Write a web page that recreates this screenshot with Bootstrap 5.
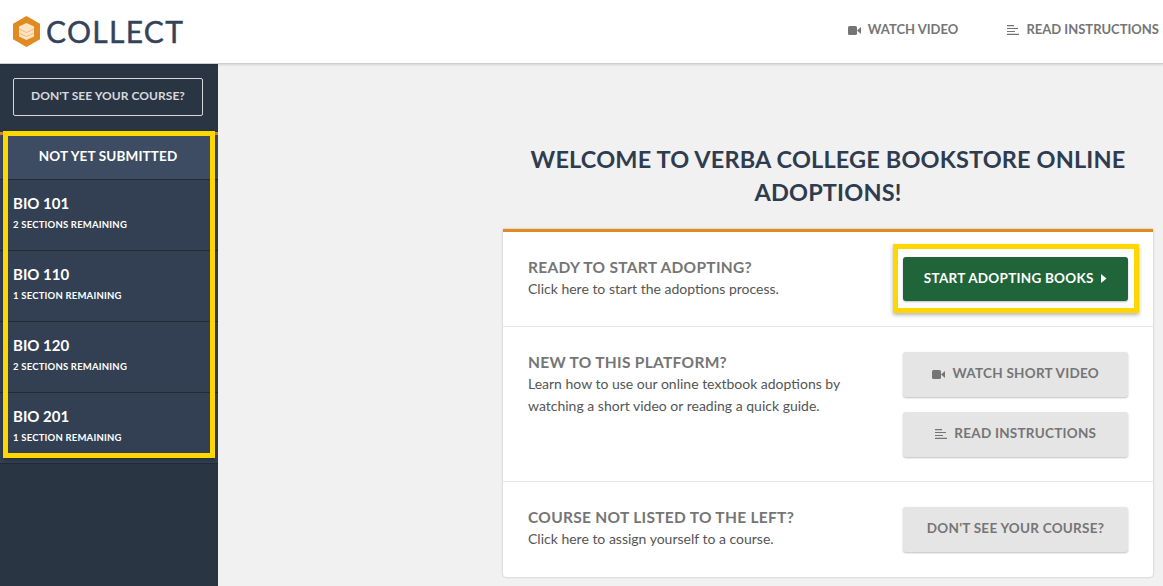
<!DOCTYPE html>
<html lang="en">
<head>
  <meta charset="UTF-8">
  <title>Collect</title>
  <meta name="viewport" content="width=device-width, initial-scale=1">
  <link href="https://cdn.jsdelivr.net/npm/bootstrap@5.3.3/dist/css/bootstrap.min.css" rel="stylesheet">
  <style>
    html, body { height: 586px; overflow: hidden; }
    body { font-family: Lato, "Open Sans", sans-serif; background: #f1f1f1; color: #333; }
    .top-bar { height: 64px; background: #fff; border-bottom: 1px solid #ccc; box-shadow: 0 1px 2px rgba(0,0,0,.12); padding-left: 13px; position: relative; z-index: 2; }
    .logo-text { font-size: 30px; line-height: 1; color: #34435a; margin: -2px 0 0 6px; letter-spacing: 1.3px; font-weight: 400; -webkit-text-stroke: .4px #34435a; }
    .top-link { font-size: 13px; font-weight: 700; color: #757575; text-decoration: none; }
    .top-links { gap: 49px; padding-right: 4px; margin-top: -4px; }
    .side-bar { width: 218px; height: 522px; background: #2a3543; color: #fff; padding-top: 14px; flex-shrink: 0; }
    .side-btn { display: block; width: 190px; height: 38px; margin: 0 0 16px 13px; padding: 0 0 2px; border: 1px solid #d5d7da; border-radius: 2px; color: #d8dade; font-size: 12px; font-weight: 700; letter-spacing: .05px; background: transparent; }
    .side-group { position: relative; border-top: 3px solid #e08a22; }
    .side-head { height: 45px; line-height: 43px; background: #3d4c63; text-align: center; font-size: 13.5px; font-weight: 700; letter-spacing: .15px; padding-right: 2px; border-bottom: 1px solid #222c39; }
    .side-item { height: 71px; background: #334053; padding: 12px 13px 0; border-bottom: 1px solid #222c39; }
    .side-item .course { font-size: 15px; font-weight: 700; line-height: 22px; }
    .side-item .remain { font-size: 9.5px; font-weight: 700; line-height: 14px; margin-top: 4px; letter-spacing: .2px; }
    .marker { position: absolute; border: 5px solid #ffd700; box-shadow: 0 2px 4px rgba(0,0,0,.3); pointer-events: none; }
    .marker-side { left: 3px; right: 3px; top: -4px; bottom: 6px; }
    .marker-btn { left: -10px; right: -11px; top: -13px; bottom: -12px; }
    .main-area { padding: 0 10px 0 285px; flex-grow: 1; min-width: 0; }
    .page-title { font-size: 23.5px; line-height: 33px; font-weight: 700; color: #2f3c4f; text-align: center; margin: 79px 0 20px; letter-spacing: .15px; }
    .adopt-card { background: #fff; border-radius: 0 0 3px 3px; border-top: 3px solid #e08a22; box-shadow: 0 0 2px rgba(0,0,0,.3); }
    .adopt-row { padding: 25px 25px 0; border-bottom: 1px solid #e6e6e6; }
    .adopt-row:last-child { border-bottom: 0; }
    .row-ready { height: 95px; }
    .row-new { height: 155px; }
    .row-course { height: 95px; }
    .adopt-row h3 { font-size: 15.5px; line-height: 20px; font-weight: 700; color: #757575; margin: 0 0 1px; letter-spacing: .3px; }
    .adopt-row p { font-size: 14px; line-height: 22px; color: #555; margin: 0; }
    .adopt-copy { width: 330px; }
    .btn-wrap { position: relative; width: 225px; }
    .btn-stack { gap: 15px; }
    .act-btn { display: block; width: 225px; height: 45px; line-height: 20px; padding: 0 0 3px; border: 0; border-radius: 3px; font-size: 13.5px; font-weight: 700; letter-spacing: .25px; text-align: center; background: #e5e5e5; color: #757575; box-shadow: 0 1px 2px rgba(0,0,0,.25); }
    .act-green { background: #20643a; color: #fff; height: 44px; padding-bottom: 2px; }
    .ico { display: inline-block; vertical-align: -1px; margin-right: 4px; }
    .caret-ico { vertical-align: 0; }
  </style>
</head>
<body>
  <!-- header -->
  <div class="top-bar d-flex justify-content-between align-items-center">
    <div class="d-flex align-items-center">
      <svg width="27" height="31" viewBox="0 0 27 31">
        <path d="M13.5 0 27 7.7v15.6L13.5 31 0 23.3V7.7z" fill="#e08a22"/>
        <path d="M13.5 7 21 10.5v10L13.5 24 6 20.5v-10z" fill="#fbe3c4"/>
        <path d="M6 13l7.5 3.5L21 13M6 17l7.5 3.5L21 17" fill="none" stroke="#efbd82" stroke-width="1"/>
      </svg>
      <span class="logo-text">COLLECT</span>
    </div>
    <div class="d-flex top-links">
      <a class="top-link" href="#">
        <svg class="ico" width="13" height="9" viewBox="0 0 13 9"><rect width="9" height="9" rx="1.5" fill="#757575"/><path d="M9 4.5 13 1v7z" fill="#757575"/></svg>
        WATCH VIDEO</a>
      <a class="top-link" href="#">
        <svg class="ico" width="12" height="10" viewBox="0 0 12 10"><path d="M0 .6h7M0 3.5h11M0 6.5h8M0 9.4h12" stroke="#757575" stroke-width="1.2"/></svg>
        READ INSTRUCTIONS</a>
    </div>
  </div>

  <div class="d-flex">
    <!-- sidebar -->
    <div class="side-bar">
      <button class="side-btn text-center">DON'T SEE YOUR COURSE?</button>
      <div class="side-group">
        <div class="side-head">NOT YET SUBMITTED</div>
        <div class="side-item"><div class="course">BIO 101</div><div class="remain">2 SECTIONS REMAINING</div></div>
        <div class="side-item"><div class="course">BIO 110</div><div class="remain">1 SECTION REMAINING</div></div>
        <div class="side-item"><div class="course">BIO 120</div><div class="remain">2 SECTIONS REMAINING</div></div>
        <div class="side-item"><div class="course">BIO 201</div><div class="remain">1 SECTION REMAINING</div></div>
        <div class="marker marker-side"></div>
      </div>
    </div>

    <!-- main -->
    <div class="main-area">
      <h1 class="page-title">WELCOME TO VERBA COLLEGE BOOKSTORE ONLINE ADOPTIONS!</h1>
      <div class="adopt-card">
        <div class="adopt-row row-ready d-flex justify-content-between align-items-start">
          <div class="adopt-copy">
            <h3>READY TO START ADOPTING?</h3>
            <p>Click here to start the adoptions process.</p>
          </div>
          <div class="btn-wrap">
            <button class="act-btn act-green">START ADOPTING BOOKS
              <svg width="6" height="9" viewBox="0 0 6 9" class="ms-1 caret-ico"><path d="M0 0 5.5 4.5 0 9z" fill="#fff"/></svg>
            </button>
            <div class="marker marker-btn"></div>
          </div>
        </div>
        <div class="adopt-row row-new d-flex justify-content-between align-items-start">
          <div class="adopt-copy">
            <h3>NEW TO THIS PLATFORM?</h3>
            <p>Learn how to use our online textbook adoptions by watching a short video or reading a quick guide.</p>
          </div>
          <div class="btn-wrap d-flex flex-column btn-stack">
            <button class="act-btn">
              <svg class="ico" width="13" height="9" viewBox="0 0 13 9"><rect width="9" height="9" rx="1.5" fill="#757575"/><path d="M9 4.5 13 1v7z" fill="#757575"/></svg>
              WATCH SHORT VIDEO</button>
            <button class="act-btn">
              <svg class="ico" width="12" height="10" viewBox="0 0 12 10"><path d="M0 .6h7M0 3.5h11M0 6.5h8M0 9.4h12" stroke="#757575" stroke-width="1.2"/></svg>
              READ INSTRUCTIONS</button>
          </div>
        </div>
        <div class="adopt-row row-course d-flex justify-content-between align-items-start">
          <div class="adopt-copy">
            <h3>COURSE NOT LISTED TO THE LEFT?</h3>
            <p>Click here to assign yourself to a course.</p>
          </div>
          <div class="btn-wrap">
            <button class="act-btn">DON'T SEE YOUR COURSE?</button>
          </div>
        </div>
      </div>
    </div>
  </div>
  <script src="https://cdn.jsdelivr.net/npm/bootstrap@5.3.3/dist/js/bootstrap.bundle.min.js"></script>
</body>
</html>
